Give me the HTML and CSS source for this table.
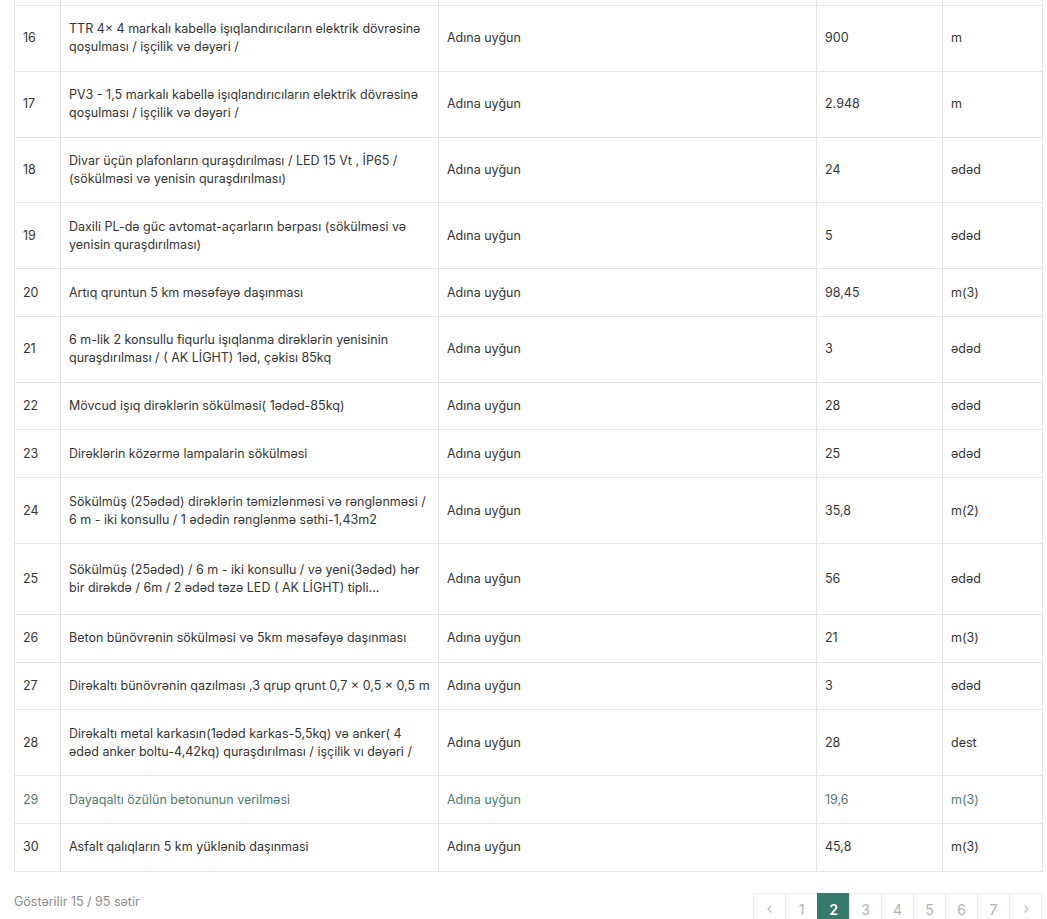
FILE: index.html
```html
<!DOCTYPE html>
<html lang="az">
<head>
    <meta charset="UTF-8">
    <meta name="viewport" content="width=device-width, initial-scale=1.0">
    <title>Smeta</title>
    <link rel="stylesheet" href="styles.css">
</head>
<body>

    <div class="container">
        <table class="work-table">
            <colgroup>
                <col class="col-no">
                <col class="col-name">
                <col class="col-note">
                <col class="col-qty">
                <col class="col-unit">
            </colgroup>
            <tbody>
                <!-- yuxarıdakı sətrin qalığı -->
                <tr class="row-cut"><td></td><td></td><td></td><td></td><td></td></tr>
                <tr><td>16</td><td>TTR 4× 4 markalı kabellə işıqlandırıcıların elektrik dövrəsinə qoşulması / işçilik və dəyəri /</td><td>Adına uyğun</td><td>900</td><td>m</td></tr>
                <tr><td>17</td><td>PV3 - 1,5 markalı kabellə işıqlandırıcıların elektrik dövrəsinə qoşulması / işçilik və dəyəri /</td><td>Adına uyğun</td><td>2.948</td><td>m</td></tr>
                <tr><td>18</td><td>Divar üçün plafonların quraşdırılması / LED 15 Vt , İP65 / (sökülməsi və yenisin quraşdırılması)</td><td>Adına uyğun</td><td>24</td><td>ədəd</td></tr>
                <tr><td>19</td><td>Daxili PL-də güc avtomat-açarların bərpası (sökülməsi və yenisin quraşdırılması)</td><td>Adına uyğun</td><td>5</td><td>ədəd</td></tr>
                <tr><td>20</td><td>Artıq qruntun 5 km məsəfəyə daşınması</td><td>Adına uyğun</td><td>98,45</td><td>m(3)</td></tr>
                <tr><td>21</td><td>6 m-lik 2 konsullu fiqurlu işıqlanma dirəklərin yenisinin quraşdırılması / ( AK LİGHT) 1əd, çəkisı 85kq</td><td>Adına uyğun</td><td>3</td><td>ədəd</td></tr>
                <tr><td>22</td><td>Mövcud işıq dirəklərin sökülməsi( 1ədəd-85kq)</td><td>Adına uyğun</td><td>28</td><td>ədəd</td></tr>
                <tr><td>23</td><td>Dirəklərin közərmə lampalarin sökülməsi</td><td>Adına uyğun</td><td>25</td><td>ədəd</td></tr>
                <tr><td>24</td><td>Sökülmüş (25ədəd) dirəklərin təmizlənməsi və rənglənməsi / 6 m - iki konsullu / 1 ədədin rənglənmə səthi-1,43m2</td><td>Adına uyğun</td><td>35,8</td><td>m(2)</td></tr>
                <tr class="row-tall"><td>25</td><td>Sökülmüş (25ədəd) / 6 m - iki konsullu / və yeni(3ədəd) hər bir dirəkdə / 6m / 2 ədəd təzə LED ( AK LİGHT) tipli...</td><td>Adına uyğun</td><td>56</td><td>ədəd</td></tr>
                <tr><td>26</td><td>Beton bünövrənin sökülməsi və 5km məsəfəyə daşınması</td><td>Adına uyğun</td><td>21</td><td>m(3)</td></tr>
                <tr><td>27</td><td>Dirəkaltı bünövrənin qazılması ,3 qrup qrunt 0,7 × 0,5 × 0,5 m</td><td>Adına uyğun</td><td>3</td><td>ədəd</td></tr>
                <tr><td>28</td><td>Dirəkaltı metal karkasın(1ədəd karkas-5,5kq) və anker( 4 ədəd anker boltu-4,42kq) quraşdırılması / işçilik vı dəyəri /</td><td>Adına uyğun</td><td>28</td><td>dest</td></tr>
                <tr class="row-hover"><td>29</td><td>Dayaqaltı özülün betonunun verilməsi</td><td>Adına uyğun</td><td>19,6</td><td>m(3)</td></tr>
                <tr><td>30</td><td>Asfalt qalıqların 5 km yüklənib daşınmasi</td><td>Adına uyğun</td><td>45,8</td><td>m(3)</td></tr>
            </tbody>
        </table>

        <div class="table-footer">
            <span class="rows-info">Göstərilir 15 / 95 sətir</span>
            <ul class="pagination">
                <li class="page-arrow">
                    <svg width="10" height="10" viewBox="0 0 10 10"><polyline points="6.5,1.5 3,5 6.5,8.5" fill="none" stroke="currentColor" stroke-width="1.2"/></svg>
                </li>
                <li>1</li>
                <li class="active">2</li>
                <li>3</li>
                <li>4</li>
                <li>5</li>
                <li>6</li>
                <li>7</li>
                <li class="page-arrow">
                    <svg width="10" height="10" viewBox="0 0 10 10"><polyline points="3.5,1.5 7,5 3.5,8.5" fill="none" stroke="currentColor" stroke-width="1.2"/></svg>
                </li>
            </ul>
        </div>
    </div>

</body>
</html>
```

FILE: styles.css
```css
body {
    font-family: Inter, "Noto Sans", sans-serif;
    background-color: #fff;
    margin: 0;
    padding: 0;
    color: #333;
}

.container {
    padding: 0 5px 0 14px;
}

.work-table {
    width: 1028px;
    border-collapse: collapse;
    table-layout: fixed;
    margin-top: -1px;
    font-size: 12.5px;
}

.col-no { width: 46px; }
.col-name { width: 378px; }
.col-note { width: 378px; }
.col-qty { width: 126px; }
.col-unit { width: 100px; }

.work-table td {
    border: 1px solid #e4e4e4;
    padding: 14.4px 8px;
    line-height: 18px;
    vertical-align: middle;
    color: #353535;
}

.work-table .row-cut td {
    padding: 0;
    height: 5px;
    line-height: 0;
}

.work-table .row-tall td {
    height: 41px;
}

.work-table .row-hover td {
    color: #4d7c6f;
}

.table-footer {
    display: flex;
    justify-content: space-between;
    align-items: flex-start;
    margin-top: 21px;
}

.rows-info {
    font-size: 12.5px;
    color: #8c8c8c;
    padding-top: 1px;
}

.pagination {
    display: flex;
    list-style-type: none;
    margin: 0;
    padding: 0;
}

.pagination li {
    width: 33px;
    height: 33px;
    display: flex;
    align-items: center;
    justify-content: center;
    border: 1px solid #ececec;
    margin-left: -1px;
    font-size: 14px;
    color: #b3b3b3;
    box-sizing: border-box;
}

.pagination .active {
    background-color: #357a6b;
    border-color: #357a6b;
    color: #fff;
    font-weight: 600;
}

.pagination .page-arrow {
    color: #bdbdbd;
}
```
